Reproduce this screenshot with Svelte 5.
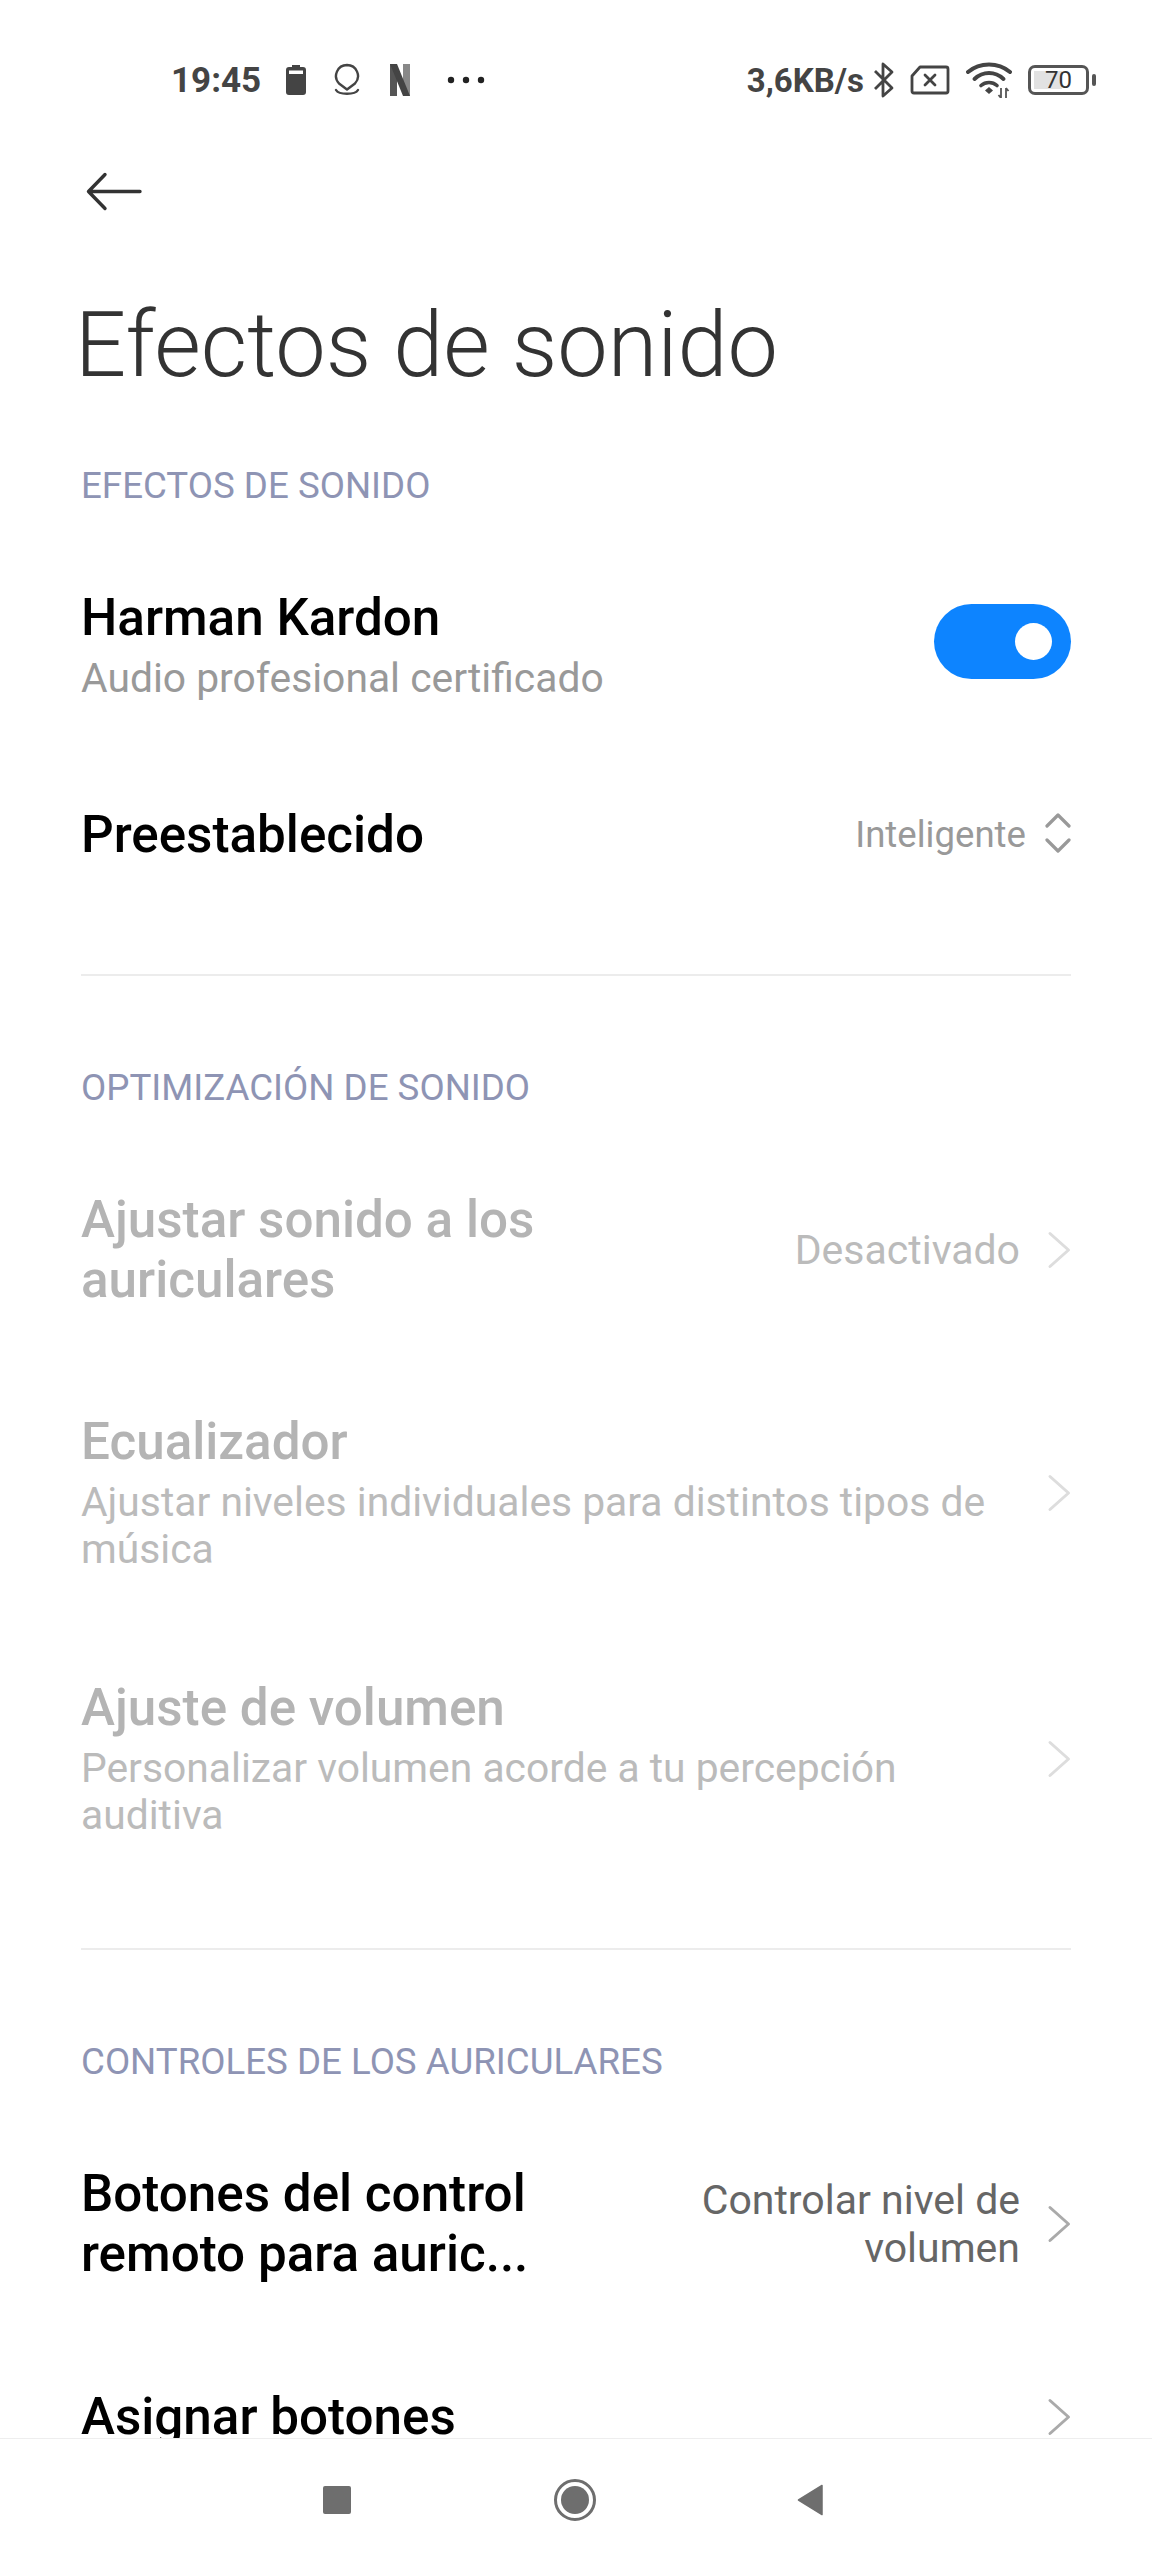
<script>
  const chevron = "M3 7.500 L21.500 24 L3 40.500";
</script>

<div class="screen">
  <div class="scroll">
    <header class="status">
      <div class="status-left">
        <span class="clock">19:45</span>
        <svg class="ic-batt" viewBox="0 0 20 30" width="20" height="30">
          <path d="M6 0h8v2h3a3 3 0 0 1 3 3v22a3 3 0 0 1-3 3H3a3 3 0 0 1-3-3V5a3 3 0 0 1 3-3h3z" fill="#444" />
          <rect x="3" y="5.500" width="14" height="3.500" fill="#fff" />
        </svg>
        <svg class="ic-loc" viewBox="0 0 26 34" width="26" height="34">
          <path d="M13 2a11 11 0 0 1 8 18.500l-8 6-8-6A11 11 0 0 1 13 2z" fill="none" stroke="#444" stroke-width="2.400" stroke-linejoin="round" />
          <path d="M2 27c3 5 19 5 22 0" fill="none" stroke="#444" stroke-width="2.400" stroke-linecap="round" />
        </svg>
        <svg class="ic-n" viewBox="0 0 20 34" width="20" height="34">
          <rect x="0" y="1" width="7" height="32" fill="#555" />
          <rect x="13" y="1" width="7" height="32" fill="#888" />
          <path d="M0 1h7l13 32h-7z" fill="#444" />
        </svg>
        <svg class="ic-dots" viewBox="0 0 38 8" width="38" height="8">
          <circle cx="4" cy="4" r="3.200" fill="#222" /><circle cx="19" cy="4" r="3.200" fill="#222" /><circle cx="34" cy="4" r="3.200" fill="#222" />
        </svg>
      </div>
      <div class="status-right">
        <span class="speed">3,6KB/s</span>
        <svg viewBox="0 0 24 36" width="24" height="36" class="ic-bt">
          <path d="M3 9 L20 26 L11 34 V2 L20 10 L3 27" fill="none" stroke="#444" stroke-width="2.800" stroke-linejoin="round" />
        </svg>
        <svg viewBox="0 0 40 30" width="40" height="30" class="ic-sim">
          <path d="M10 2h26a2 2 0 0 1 2 2v22a2 2 0 0 1-2 2H4a2 2 0 0 1-2-2V11z" fill="none" stroke="#444" stroke-width="2.800" stroke-linejoin="round" />
          <path d="M15 10l10 10M25 10L15 20" stroke="#444" stroke-width="2.800" stroke-linecap="round" />
        </svg>
        <svg viewBox="0 0 46 36" width="46" height="36" class="ic-wifi">
          <path d="M2 10C14 0 32 0 44 10" fill="none" stroke="#444" stroke-width="4" stroke-linecap="round" />
          <path d="M8.500 17C17 9 29 9 37.500 17" fill="none" stroke="#444" stroke-width="4" stroke-linecap="round" />
          <path d="M15 23.500C19.500 19.500 26.500 19.500 31 23.500" fill="none" stroke="#444" stroke-width="3.600" stroke-linecap="round" />
          <path d="M19 28.500l4-3.500 4 3.500-4 3.500z" fill="#444" />
          <path d="M35 26v10M40 26v10M32.500 33l2.500 3M42.500 29l-2.500-3" stroke="#555" stroke-width="1.800" fill="none" />
        </svg>
        <div class="battery">
          <div class="battery-body">
            <div class="battery-fill"></div>
            <span>70</span>
          </div>
          <div class="battery-tip"></div>
        </div>
      </div>
    </header>

    <div class="back">
      <svg viewBox="0 0 56 40" width="56" height="40">
        <path d="M54 19.500H3M19 2.500 L2.500 19.500 L19 36.500" fill="none" stroke="#333" stroke-width="3.400" stroke-linecap="round" stroke-linejoin="round" />
      </svg>
    </div>

    <h1>Efectos de sonido</h1>

    <h2 class="first">EFECTOS DE SONIDO</h2>

    <div class="row harman">
      <div class="text">
        <div class="title">Harman Kardon</div>
        <div class="sub">Audio profesional certificado</div>
      </div>
      <div class="toggle"><div class="knob"></div></div>
    </div>

    <div class="row preset">
      <div class="text"><div class="title">Preestablecido</div></div>
      <div class="value small">Inteligente</div>
      <svg class="updown" viewBox="0 0 28 42" width="28" height="42">
        <path d="M4 14 L15 3 L26 14M4 28 L15 39 L26 28" fill="none" stroke="#999" stroke-width="3.200" stroke-linecap="round" stroke-linejoin="round" />
      </svg>
    </div>

    <div class="rule first-rule"></div>

    <h2>OPTIMIZACIÓN DE SONIDO</h2>

    <div class="row off ajustar">
      <div class="text wide"><div class="title">Ajustar sonido a los auriculares</div></div>
      <div class="value">Desactivado</div>
      <svg class="chev" viewBox="0 0 24 48" width="24" height="48"><path d={chevron} /></svg>
    </div>

    <div class="row off eq">
      <div class="text">
        <div class="title">Ecualizador</div>
        <div class="sub">Ajustar niveles individuales para distintos tipos de música</div>
      </div>
      <svg class="chev" viewBox="0 0 24 48" width="24" height="48"><path d={chevron} /></svg>
    </div>

    <div class="row off vol">
      <div class="text">
        <div class="title">Ajuste de volumen</div>
        <div class="sub">Personalizar volumen acorde a tu percepción auditiva</div>
      </div>
      <svg class="chev" viewBox="0 0 24 48" width="24" height="48"><path d={chevron} /></svg>
    </div>

    <div class="rule second-rule"></div>

    <h2>CONTROLES DE LOS AURICULARES</h2>

    <div class="row remote">
      <div class="text narrow"><div class="title">Botones del control<br />remoto para auric...</div></div>
      <div class="value multi">Controlar nivel de volumen</div>
      <svg class="chev dark" viewBox="0 0 24 48" width="24" height="48"><path d={chevron} /></svg>
    </div>

    <div class="row assign">
      <div class="text"><div class="title">Asignar botones</div></div>
      <svg class="chev dark" viewBox="0 0 24 48" width="24" height="48"><path d={chevron} /></svg>
    </div>
  </div>

  <nav class="navbar">
    <div class="nav-square"></div>
    <div class="nav-home"><div></div></div>
    <svg class="nav-back" viewBox="0 0 26 32" width="26" height="32">
      <path d="M25 1.500 L1.500 16 L25 30.500z" fill="#6e6e6e" stroke="#6e6e6e" stroke-width="1.500" stroke-linejoin="round" />
    </svg>
  </nav>
</div>

<style>
  :global(body) {
    margin: 0;
    background: #fff;
  }
  .screen {
    width: 1152px;
    height: 2560px;
    display: flex;
    flex-direction: column;
    background: #fff;
    font-family: Roboto, "Liberation Sans", sans-serif;
    overflow: hidden;
  }
  .scroll {
    flex: none;
    height: 2438px;
    overflow: hidden;
  }

  .status {
    height: 44px;
    padding: 58px 0 0 171px;
    display: flex;
    justify-content: space-between;
    align-items: center;
    color: #444;
    font-weight: 700;
  }
  .clock { font-size: 35px; }
  .speed { font-size: 33px; }
  .status-left, .status-right {
    display: flex;
    align-items: center;
  }
  .ic-batt { margin-left: 25px; }
  .ic-loc { margin-left: 28px; }
  .ic-n { margin-left: 30px; }
  .ic-dots { margin-left: 37px; }
  .status-right { margin-right: 56px; }
  .ic-bt { margin-left: 8px; }
  .ic-sim { margin-left: 14px; }
  .ic-wifi { margin-left: 16px; }
  .battery {
    margin-left: 16px;
    display: flex;
    align-items: center;
  }
  .battery-body {
    position: relative;
    width: 55px;
    height: 24px;
    border: 3px solid #555;
    border-radius: 7px;
    display: flex;
    align-items: center;
    justify-content: center;
    overflow: hidden;
  }
  .battery-fill {
    position: absolute;
    left: 3px;
    top: 3px;
    bottom: 3px;
    width: 28px;
    background: #e2e2e2;
  }
  .battery-body span {
    position: relative;
    font-size: 24px;
    font-weight: 400;
    color: #333;
  }
  .battery-tip {
    width: 4px;
    height: 12px;
    margin-left: 3px;
    background: #555;
    border-radius: 2px;
  }

  .back {
    padding: 70px 0 0 86px;
    height: 52px;
  }
  .back svg { display: block; }

  h1 {
    margin: 69px 0 0;
    padding: 0 0 0 75px;
    font-size: 90px;
    line-height: 106px;
    font-weight: 300;
    color: #333;
  }
  h2 {
    margin: 92px 0 0;
    padding: 0 81px;
    font-size: 36.700px;
    line-height: 40px;
    font-weight: 400;
    color: #8e94b4;
  }
  h2.first { margin-top: 67px; }

  .row {
    display: flex;
    align-items: center;
    padding: 0 81px;
  }
  .text { flex: 1; min-width: 0; }
  .text.wide { flex: none; width: 520px; margin-right: auto; }
  .text.narrow { flex: none; width: 500px; margin-right: auto; }
  .title {
    font-size: 51.200px;
    line-height: 60px;
    font-weight: 500;
    color: #000;
  }
  .sub {
    font-size: 40.800px;
    line-height: 47px;
    color: #999;
    margin-top: 7px;
  }
  .value {
    font-size: 41px;
    line-height: 48px;
    color: #999;
    text-align: right;
    flex: none;
  }
  .value.small { font-size: 36.600px; }
  .value.multi { width: 340px; color: #666; }
  .updown { margin: 0 0 4px 17px; flex: none; }
  .chev {
    flex: none;
    margin-left: 27px;
    fill: none;
    stroke: #ddd;
    stroke-width: 3;
    stroke-linecap: round;
    stroke-linejoin: round;
  }
  .chev.dark { stroke: #aaa; }

  .off .title { color: #b4b4b4; }
  .off .sub { color: #bbb; }
  .off .value { color: #bbb; }
  .off .text { padding-right: 20px; }
  .off .text.wide { padding-right: 0; }

  .harman { margin-top: 82px; }
  .harman .toggle { flex: none; margin-bottom: 8px; }
  .preset { margin-top: 103px; }
  .ajustar { margin-top: 82px; }
  .eq { margin-top: 102px; }
  .vol { margin-top: 105px; }
  .remote { margin-top: 82px; }
  .assign { margin-top: 103px; }

  .toggle {
    width: 137px;
    height: 75px;
    border-radius: 38px;
    background: #0d84ff;
    position: relative;
  }
  .knob {
    position: absolute;
    right: 19px;
    top: 19px;
    width: 37px;
    height: 37px;
    border-radius: 50%;
    background: #fff;
  }

  .rule {
    height: 2px;
    margin: 0 81px;
    background: #ececec;
  }
  .first-rule { margin-top: 109px; }
  .second-rule { margin-top: 109px; }

  .navbar {
    flex: none;
    height: 121px;
    border-top: 1px solid #eee;
    display: flex;
    align-items: center;
    padding-left: 323px;
  }
  .nav-square {
    width: 28px;
    height: 28px;
    background: #6e6e6e;
    border-radius: 2px;
  }
  .nav-home {
    margin-left: 203px;
    width: 42px;
    height: 42px;
    border: 3px solid #6e6e6e;
    border-radius: 50%;
    box-sizing: border-box;
    display: flex;
    align-items: center;
    justify-content: center;
  }
  .nav-home div {
    width: 28px;
    height: 28px;
    border-radius: 50%;
    background: #6e6e6e;
  }
  .nav-back { margin-left: 201px; }
</style>
